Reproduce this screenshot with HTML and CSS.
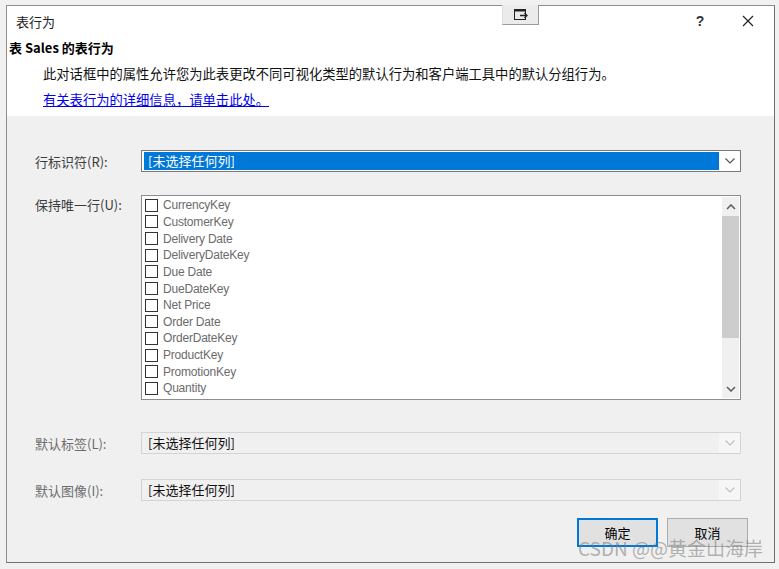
FILE: index.html
```html
<!DOCTYPE html>
<html lang="zh-CN">
<head>
<meta charset="utf-8">
<title>表行为</title>
<link rel="stylesheet" href="styles.css">
</head>
<body>
<div class="window">
  <div class="pin-btn">
    <svg width="16" height="13" viewBox="0 0 16 13"><rect x="1.5" y="1.5" width="11" height="10" fill="none" stroke="#222" stroke-width="1"/><rect x="1" y="1" width="12" height="2.5" fill="#222"/><path d="M7 7.5h7M11.5 5l2.5 2.5-2.5 2.5" fill="none" stroke="#222" stroke-width="1.3"/></svg>
  </div>
  <div class="top">
    <div class="titlebar">
      <span class="title">表行为</span>
      <span class="help">?</span>
      <span class="close"><svg width="12" height="12" viewBox="0 0 12 12"><path d="M1 1L11 11M11 1L1 11" stroke="#222" stroke-width="1.2"/></svg></span>
    </div>
    <div class="heading">表 Sales 的表行为</div>
    <div class="desc">此对话框中的属性允许您为此表更改不同可视化类型的默认行为和客户端工具中的默认分组行为。</div>
    <div class="desc"><a class="link" href="#">有关表行为的详细信息，请单击此处。</a></div>
  </div>
  <div class="body">
    <div class="row row1">
      <span class="label">行标识符(R):</span>
      <div class="combo">
        <div class="combo-value selected">[未选择任何列]</div>
        <div class="combo-arrow"><svg width="10" height="6" viewBox="0 0 10 6"><path d="M0.5 0.5L5 5L9.5 0.5" fill="none" stroke="#555" stroke-width="1.2"/></svg></div>
      </div>
    </div>
    <div class="row row2">
      <span class="label label-top">保持唯一行(U):</span>
      <div class="listbox">
        <div class="items">
          <div class="item"><span class="check"></span>CurrencyKey</div>
          <div class="item"><span class="check"></span>CustomerKey</div>
          <div class="item"><span class="check"></span>Delivery Date</div>
          <div class="item"><span class="check"></span>DeliveryDateKey</div>
          <div class="item"><span class="check"></span>Due Date</div>
          <div class="item"><span class="check"></span>DueDateKey</div>
          <div class="item"><span class="check"></span>Net Price</div>
          <div class="item"><span class="check"></span>Order Date</div>
          <div class="item"><span class="check"></span>OrderDateKey</div>
          <div class="item"><span class="check"></span>ProductKey</div>
          <div class="item"><span class="check"></span>PromotionKey</div>
          <div class="item"><span class="check"></span>Quantity</div>
        </div>
        <div class="scrollbar">
          <div class="sb-arrow"><svg width="10" height="6" viewBox="0 0 10 6"><path d="M1 5L5 1L9 5" fill="none" stroke="#606060" stroke-width="1.6"/></svg></div>
          <div class="sb-thumb"></div>
          <div class="sb-track"></div>
          <div class="sb-arrow"><svg width="10" height="6" viewBox="0 0 10 6"><path d="M1 1L5 5L9 1" fill="none" stroke="#606060" stroke-width="1.6"/></svg></div>
        </div>
      </div>
    </div>
    <div class="row row3">
      <span class="label disabled">默认标签(L):</span>
      <div class="combo combo-disabled">
        <div class="combo-value">[未选择任何列]</div>
        <div class="combo-arrow"><svg width="10" height="6" viewBox="0 0 10 6"><path d="M0.5 0.5L5 5L9.5 0.5" fill="none" stroke="#bdbdbd" stroke-width="1.1"/></svg></div>
      </div>
    </div>
    <div class="row row4">
      <span class="label disabled">默认图像(I):</span>
      <div class="combo combo-disabled">
        <div class="combo-value">[未选择任何列]</div>
        <div class="combo-arrow"><svg width="10" height="6" viewBox="0 0 10 6"><path d="M0.5 0.5L5 5L9.5 0.5" fill="none" stroke="#bdbdbd" stroke-width="1.1"/></svg></div>
      </div>
    </div>
    <div class="buttons">
      <button class="btn btn-default">确定</button>
      <button class="btn">取消</button>
    </div>
  </div>
  <div class="watermark">CSDN @@黄金山海岸</div>
</div>
</body>
</html>
```

FILE: styles.css
```css
html, body {
  margin: 0;
  padding: 0;
}
body {
  background: #f1f1f1;
  font-family: "Noto Sans CJK SC", "Liberation Sans", sans-serif;
  font-size: 13px;
  color: #000;
  width: 779px;
  height: 569px;
  overflow: hidden;
}
.window {
  position: relative;
  margin: 5px 0 0 6px;
  width: 767px;
  height: 556px;
  border: 1px solid #8e8e8e;
  border-right-color: #6f6f6f;
  border-bottom-color: #6f6f6f;
  background: #f0f0f0;
}
.pin-btn {
  position: absolute;
  left: 495px;
  top: -1px;
  width: 35px;
  height: 19px;
  background: #ebebeb;
  border-right: 1px solid #9a9a9a;
  border-bottom: 1px solid #9a9a9a;
  border-left: 1px solid #dedede;
  display: flex;
  align-items: center;
  justify-content: center;
}
.top {
  background: #fff;
  height: 110px;
}
.titlebar {
  height: 30px;
  display: flex;
  align-items: center;
}
.title {
  margin-left: 9px;
  font-size: 13px;
  color: #222;
}
.help {
  margin-left: auto;
  width: 16px;
  text-align: center;
  font-family: "Liberation Sans", sans-serif;
  font-size: 14px;
  font-weight: bold;
  color: #333;
}
.close {
  width: 12px;
  height: 12px;
  margin-left: 34px;
  margin-right: 20px;
  display: flex;
}
.heading {
  height: 24px;
  line-height: 24px;
  padding-left: 2px;
  font-weight: bold;
  font-size: 13px;
}
.desc {
  height: 24px;
  line-height: 24px;
  margin-top: 2px;
  padding-left: 36px;
  font-size: 13.3px;
  color: #111;
}
.link {
  color: #0000ee;
  text-decoration: underline;
}
.body {
  padding: 0 33px 0 28px;
}
.row {
  display: flex;
  align-items: center;
}
.row1 { margin-top: 34px; }
.row2 { margin-top: 23px; align-items: flex-start; }
.row3 { margin-top: 32px; }
.row4 { margin-top: 25px; }
.label {
  width: 106px;
  flex: none;
  font-size: 13px;
  color: #3c3c3c;
}
.label.disabled {
  color: #6d6d6d;
}
.label-top {
  margin-top: 1px;
  line-height: 18px;
}
.combo {
  flex: 1;
  height: 22px;
  box-sizing: border-box;
  border: 1px solid #7a7a7a;
  background: #fff;
  display: flex;
  align-items: stretch;
}
.combo-value {
  flex: 1;
  margin: 1px 0 1px 2px;
  padding-left: 4px;
  line-height: 18px;
  font-size: 13px;
}
.combo-value.selected {
  background: #0078d7;
  color: #fff;
}
.combo-arrow {
  width: 21px;
  display: flex;
  align-items: center;
  justify-content: center;
}
.combo-disabled {
  border-color: #d4d4d4;
  background: #f0f0f0;
}
.combo-disabled .combo-value {
  color: #111;
}
.combo-disabled .combo-arrow {
  background: #f6f6f6;
}
.listbox {
  flex: 1;
  height: 205px;
  box-sizing: border-box;
  border: 1px solid #8a8d94;
  background: #fff;
  display: flex;
}
.items {
  flex: 1;
  padding-top: 1px;
  padding-left: 3px;
}
.item {
  height: 16.65px;
  display: flex;
  align-items: center;
  font-family: "Liberation Sans", sans-serif;
  font-size: 12px;
  letter-spacing: -0.2px;
  color: #6b6b6b;
}
.check {
  width: 11px;
  height: 11px;
  border: 1px solid #333;
  background: #fff;
  margin-right: 5px;
  flex: none;
}
.scrollbar {
  width: 17px;
  margin: 1px 1px 1px 0;
  background: #f0f0f0;
  display: flex;
  flex-direction: column;
}
.sb-arrow {
  height: 19px;
  display: flex;
  align-items: center;
  justify-content: center;
}
.sb-thumb {
  height: 122px;
  margin: 0 0;
  background: #cdcdcd;
}
.sb-track {
  flex: 1;
}
.buttons {
  margin-top: 17px;
  display: flex;
  justify-content: flex-end;
  gap: 9px;
  margin-right: -7px;
}
.btn {
  width: 81px;
  height: 29px;
  box-sizing: border-box;
  border: 1px solid #adadad;
  background: #e1e1e1;
  font-family: "Noto Sans CJK SC", sans-serif;
  font-size: 13px;
  color: #000;
  padding: 0;
}
.btn-default {
  border: 2px solid #0078d7;
}
.watermark {
  position: absolute;
  left: 571px;
  top: 529px;
  font-family: "Noto Sans CJK SC", "Liberation Sans", sans-serif;
  font-size: 19px;
  line-height: 26px;
  color: rgba(120, 120, 120, 0.55);
  white-space: nowrap;
}
```
